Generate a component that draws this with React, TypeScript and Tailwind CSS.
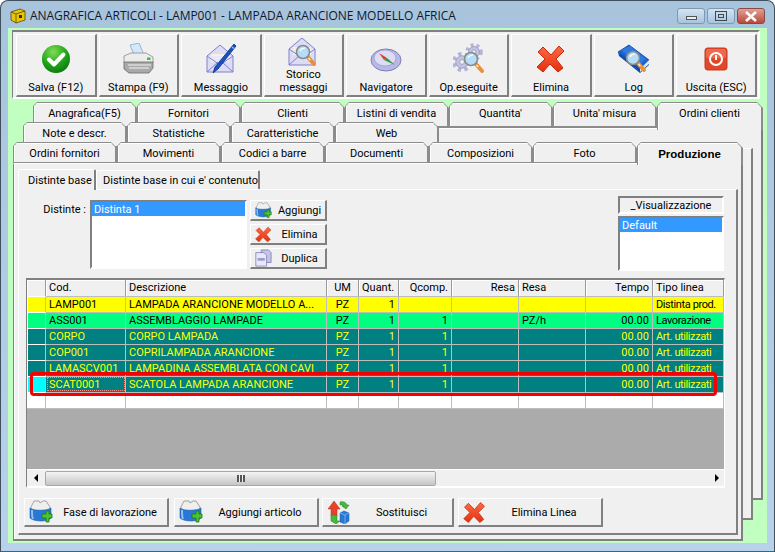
import type { ReactNode } from "react";

const raised =
  "border-t border-l border-t-white border-l-white border-r-2 border-b-2 border-r-[#808080] border-b-[#808080] bg-[#f0f0f0]";
const sunken =
  "border-t-2 border-l-2 border-t-[#808080] border-l-[#808080] border-r-2 border-b-2 border-r-white border-b-white";

function CheckIcon() {
  return (
    <svg width="30" height="30" viewBox="0 0 30 30">
      <defs>
        <radialGradient id="chk" cx="40%" cy="25%" r="85%">
          <stop offset="0" stopColor="#7fdc55" />
          <stop offset="0.55" stopColor="#1fa31a" />
          <stop offset="1" stopColor="#0a6e10" />
        </radialGradient>
      </defs>
      <circle cx="15" cy="15" r="14" fill="url(#chk)" />
      <path d="M8 15.5l5 5 9.5-10" fill="none" stroke="#fff" strokeWidth="4" strokeLinecap="round" strokeLinejoin="round" />
    </svg>
  );
}

function PrinterIcon() {
  return (
    <svg width="32" height="32" viewBox="0 0 32 32">
      <path d="M8 2l9-2 5 12-9 2z" fill="#d2e8fb" stroke="#86a8c6" strokeWidth="0.8" />
      <path d="M2 13l7-3h15l7 4v6H2z" fill="#ececec" stroke="#8a8a8a" strokeWidth="0.8" />
      <path d="M2 19h29v6l-4 5H7l-5-4z" fill="#a9a9a9" stroke="#6a6a6a" strokeWidth="0.8" />
      <path d="M6 22h23M7 25h20" stroke="#f4f4f4" strokeWidth="1.1" />
      <rect x="25" y="14.5" width="3.5" height="2.5" fill="#3fbe3f" />
    </svg>
  );
}

function Envelope() {
  return (
    <>
      <path d="M2 13L15 2l13 11v16H2z" fill="#dcdcf7" stroke="#8080c8" strokeWidth="1" />
      <path d="M6 11h18v8H6z" fill="#fbf1d4" />
      <path d="M2 13l13 9 13-9" fill="#e8e8fb" stroke="#8080c8" strokeWidth="1" />
      <path d="M2 29l11-10M28 29L17 19" stroke="#8080c8" strokeWidth="1" />
    </>
  );
}

function Magnifier({ x, y }: { x: number; y: number }) {
  return (
    <g transform={`translate(${x} ${y})`}>
      <path d="M9 9l7 8" stroke="#e8903a" strokeWidth="4" strokeLinecap="round" />
      <path d="M10.5 11l1.8 2" stroke="#fff2c8" strokeWidth="1.2" />
      <circle cx="5" cy="5" r="6.5" fill="#b5ddf7" stroke="#8a8a8a" strokeWidth="1.6" />
      <path d="M2 4c1-2 2.5-3 5-3" stroke="#fff" strokeWidth="1.2" fill="none" />
    </g>
  );
}

function MailPenIcon() {
  return (
    <svg width="32" height="32" viewBox="0 0 32 32">
      <Envelope />
      <path d="M29 1l2 2L13 26l-5 4 2-6z" fill="#1753c4" stroke="#0b2f7d" strokeWidth="0.8" />
      <path d="M27 4l2 1.5" stroke="#9ac0f5" strokeWidth="1.4" />
    </svg>
  );
}

function MailSearchIcon() {
  return (
    <svg width="32" height="32" viewBox="0 0 32 32">
      <Envelope />
      <Magnifier x={11} y={11} />
    </svg>
  );
}

function CompassIcon() {
  return (
    <svg width="32" height="32" viewBox="0 0 32 32">
      <ellipse cx="16" cy="17" rx="15" ry="11" fill="#b8b8e6" stroke="#7d7db8" strokeWidth="1" />
      <ellipse cx="15" cy="15" rx="11" ry="8" fill="#dcdcf4" stroke="#9a9ad0" strokeWidth="0.8" />
      <path d="M9 10l8 5-3 2z" fill="#e33c26" />
      <path d="M14 17l3-2 8 7z" fill="#2f9a3a" />
    </svg>
  );
}

function Gear({ x, y, r }: { x: number; y: number; r: number }) {
  return (
    <g>
      <circle cx={x} cy={y} r={r} fill="none" stroke="#b4b4d8" strokeWidth={r * 0.5} strokeDasharray={`${r * 0.42} ${r * 0.42}`} />
      <circle cx={x} cy={y} r={r * 0.78} fill="#c4c4e2" stroke="#8c8cba" strokeWidth="0.7" />
      <circle cx={x} cy={y} r={r * 0.3} fill="#f0f0f0" stroke="#8c8cba" strokeWidth="0.7" />
    </g>
  );
}

function GearsIcon() {
  return (
    <svg width="32" height="32" viewBox="0 0 32 32">
      <Gear x={21} y={9} r={7} />
      <Gear x={9} y={19} r={8} />
      <Magnifier x={13} y={11} />
    </svg>
  );
}

function CrossIcon({ size = 30 }: { size?: number }) {
  return (
    <svg width={size} height={size} viewBox="0 0 30 30">
      <defs>
        <linearGradient id="crs" x1="0" y1="0" x2="0" y2="1">
          <stop offset="0" stopColor="#ff6a45" />
          <stop offset="1" stopColor="#e2300f" />
        </linearGradient>
      </defs>
      <path d="M7 3l8 8 8-9 5 5-8 8 7 9-5 4-8-8-7 8-6-5 8-8-7-7z" fill="url(#crs)" stroke="#c8280c" strokeWidth="1" strokeLinejoin="round" />
    </svg>
  );
}

function BookIcon() {
  return (
    <svg width="32" height="30" viewBox="0 0 32 30">
      <path d="M0 8L11 1l20 15-9 9z" fill="#1b63d1" stroke="#0d3f98" strokeWidth="0.8" />
      <path d="M3 6l9-4 16 13-7 6z" fill="#2f7ae0" />
      <path d="M0 8l1 4 21 17 9-8v-5l-9 9z" fill="#0d4cb0" />
      <path d="M22 25l9-9v4l-9 8z" fill="#dfe8f4" />
      <Magnifier x={10} y={9} />
    </svg>
  );
}

function PowerIcon() {
  return (
    <svg width="24" height="24" viewBox="0 0 24 24">
      <rect x="1" y="1" width="22" height="22" rx="2.5" fill="#e0482a" stroke="#c73a1e" />
      <rect x="2" y="2" width="20" height="9" rx="2" fill="#ee6a4c" />
      <circle cx="12" cy="12" r="6" fill="none" stroke="#fff" strokeWidth="2" />
      <path d="M12 8v5" stroke="#fff" strokeWidth="2" />
    </svg>
  );
}

function BinPlusIcon({ size = 24 }: { size?: number }) {
  return (
    <svg width={size} height={size} viewBox="0 0 24 24">
      <path d="M2 7l3-6h5l1 2 3-2h3l4 6v4H2z" fill="#efefef" stroke="#8f8f8f" strokeWidth="0.8" />
      <path d="M1 8c3 3 17 3 21 0v10c-3 4-17 4-21 0z" fill="#2a78d6" stroke="#175aa8" strokeWidth="0.6" />
      <path d="M3 10c0 4 0 7 1 9" stroke="#8cc0f2" strokeWidth="2" fill="none" />
      <path d="M14 13h4v-3h3v3h3v4h-3v4h-3v-4h-4z" transform="translate(-1 1)" fill="#4ec22e" stroke="#1d7a17" strokeWidth="0.8" />
    </svg>
  );
}

function CopyIcon() {
  return (
    <svg width="20" height="20" viewBox="0 0 20 20">
      <path d="M8 1h8l3 3v11H8z" fill="#c4c4e6" stroke="#7474ae" strokeWidth="0.8" />
      <path d="M2 4h9l3 3v12H2z" fill="#e8e8f8" stroke="#7474ae" strokeWidth="0.8" />
      <path d="M4 10h8v3H4z" fill="#9a9ad0" />
    </svg>
  );
}

function SwapIcon() {
  return (
    <svg width="24" height="24" viewBox="0 0 24 24">
      <path d="M6 0l6 8H9v7H3V8H0z" transform="translate(1 1)" fill="#e8432a" stroke="#b02a14" strokeWidth="0.5" />
      <path d="M13 2c3-1 6 0 7 3h2l-3 4-4-3h2c-1-1-2-1-4-1z" fill="#46b83c" stroke="#23801e" strokeWidth="0.5" />
      <path d="M4 15h6v6h3l-4 3-5-3z" fill="#46b83c" stroke="#23801e" strokeWidth="0.5" />
      <path d="M13 13l4-2 5 2v8l-4 3-5-2z" fill="#2a78d6" stroke="#175aa8" strokeWidth="0.5" />
      <path d="M13 13l5 2 4-2M18 15v9" stroke="#8cc0f2" strokeWidth="0.7" fill="none" />
    </svg>
  );
}

function AppIcon() {
  return (
    <svg width="16" height="16" viewBox="0 0 16 16">
      <path d="M1 4l9-3 5 2v9l-9 3-5-3z" fill="#e8c40c" stroke="#5a4a00" strokeWidth="0.8" />
      <path d="M1 4l5 2v9" fill="none" stroke="#5a4a00" strokeWidth="0.8" />
      <path d="M6 6l9-3" stroke="#5a4a00" strokeWidth="0.8" />
      <rect x="9" y="7" width="3" height="3" fill="#3a3000" />
    </svg>
  );
}

function WinButton({ children, close }: { children: ReactNode; close?: boolean }) {
  return (
    <div
      className={`flex h-[16px] w-[28px] items-center justify-center rounded-[3px] border ${
        close
          ? "border-[#8a4a44] bg-gradient-to-b from-[#dfa098] to-[#b8483a]"
          : "border-[#7d98b2] bg-gradient-to-b from-[#d4e4f2] to-[#a8c4dc]"
      }`}
    >
      {children}
    </div>
  );
}

function ToolButton({ icon, label, tall }: { icon: ReactNode; label: ReactNode; tall?: boolean }) {
  return (
    <button className={`flex h-[63px] flex-col items-center justify-end pb-[1px] ${raised}`}>
      <span className={`flex h-[32px] items-center justify-center ${tall ? "mb-0" : "mb-[6px]"}`}>{icon}</span>
      <span className="text-center text-[11px] leading-[13px]">{label}</span>
    </button>
  );
}

function Tab({ label, active, bold }: { label: string; active?: boolean; bold?: boolean }) {
  return (
    <div
      className={`flex flex-col bg-[#8c8c8c] [clip-path:polygon(4px_0,calc(100%-6px)_0,100%_6px,100%_100%,0_100%,0_4px)] ${
        active ? "relative z-10 h-[calc(100%+2px)] w-[106px]" : "h-full w-[104px]"
      }`}
    >
      <div
        className={`ml-px mt-px flex-1 bg-[#f0f0f0] pt-[3px] text-center leading-[16px] [clip-path:polygon(3px_0,calc(100%-4px)_0,100%_4px,100%_100%,0_100%,0_3px)] ${
          active ? "mr-[2px] shadow-[inset_1px_1px_0_#fff]" : "mb-[2px] mr-[2px] shadow-[inset_1px_1px_0_#fff]"
        } ${bold ? "font-['Liberation_Sans',sans-serif] text-[11.5px] font-bold" : "text-[11px]"}`}
      >
        {label}
      </div>
    </div>
  );
}

function SmallButton({ icon, label }: { icon: ReactNode; label: string }) {
  return (
    <button className={`flex h-[21px] w-[77px] items-center pl-[3px] text-[11px] ${raised}`}>
      <span className="flex w-[18px] shrink-0 items-center justify-center">{icon}</span>
      <span className="flex-1 pl-[2px] pt-[3px] text-center">{label}</span>
    </button>
  );
}

function WideButton({ icon, label, className }: { icon: ReactNode; label: string; className: string }) {
  return (
    <button className={`flex h-[29px] items-center pl-[3px] text-[11px] ${raised} ${className}`}>
      <span className="flex w-[25px] shrink-0 items-center justify-center">{icon}</span>
      <span className="flex-1 pt-[2px] text-center">{label}</span>
    </button>
  );
}

const cols = "grid grid-cols-[19px_80px_201px_32px_40px_53px_67px_67px_67px_71px]";

type Row = { cells: string[]; bg: string; text: string; head: string };

const teal = { bg: "bg-[#008080]", text: "text-[#ffff00]", head: "bg-[#008080]" };
const artRow = (cod: string, desc: string) => ({
  cells: [cod, desc, "PZ", "1", "1", "", "", "00.00", "Art. utilizzati"],
  ...teal,
});

const rows: Row[] = [
  {
    cells: ["LAMP001", "LAMPADA ARANCIONE MODELLO A...", "PZ", "1", "", "", "", "", "Distinta prod."],
    bg: "bg-[#ffff00]",
    text: "text-black",
    head: "bg-[#ffff00]",
  },
  {
    cells: ["ASS001", "ASSEMBLAGGIO LAMPADE", "PZ", "1", "1", "", "PZ/h", "00.00", "Lavorazione"],
    bg: "bg-[#00ff80]",
    text: "text-black",
    head: "bg-[#00ff80]",
  },
  artRow("CORPO", "CORPO LAMPADA"),
  artRow("COP001", "COPRILAMPADA ARANCIONE"),
  artRow("LAMASCV001", "LAMPADINA ASSEMBLATA CON CAVI"),
  { ...artRow("SCAT0001", "SCATOLA LAMPADA ARANCIONE"), head: "bg-[#00ffff]" },
  { cells: ["", "", "", "", "", "", "", "", ""], bg: "bg-white", text: "text-black", head: "bg-white" },
];

const align = ["text-left", "text-left", "text-center", "text-right", "text-right", "text-right", "text-left", "text-right", "text-left"];

function HeaderCell({ children, className }: { children?: ReactNode; className?: string }) {
  return (
    <div className={`h-[16px] truncate border-r border-r-[#9a9a9a] bg-[#f0f0f0] px-[3px] text-[11px] leading-[16px] shadow-[inset_1px_1px_0_#fff] ${className ?? ""}`}>
      {children}
    </div>
  );
}

function Grid() {
  return (
    <div className="ml-[7px] flex h-[210px] w-[699px] flex-col overflow-hidden border-t-2 border-l border-r border-b-2 border-t-[#808080] border-l-[#808080] border-r-white border-b-white">
      <div className={cols}>
        <HeaderCell />
        <HeaderCell>Cod.</HeaderCell>
        <HeaderCell>Descrizione</HeaderCell>
        <HeaderCell className="text-center">UM</HeaderCell>
        <HeaderCell>Quant.</HeaderCell>
        <HeaderCell className="text-right">Qcomp.</HeaderCell>
        <HeaderCell className="text-right">Resa</HeaderCell>
        <HeaderCell>Resa</HeaderCell>
        <HeaderCell className="text-right">Tempo</HeaderCell>
        <HeaderCell>Tipo linea</HeaderCell>
      </div>
      {rows.map((row, i) => (
        <div key={i} className={cols}>
          <div className={`h-[16px] border-t border-l border-r border-t-white border-l-white border-r-[#bdbdbd] ${row.head}`} />
          {row.cells.map((cell, j) => (
            <div
              key={j}
              className={`h-[16px] overflow-hidden whitespace-nowrap border-t border-r border-[#bdbdbd] px-[3px] text-[11px] leading-[15px] ${row.bg} ${row.text} ${align[j]} ${
                j === 8 ? "tracking-[-0.4px]" : ""
              } ${i === 5 && j === 0 ? "outline-1 -outline-offset-2 outline-dotted outline-[#ff8a80]" : ""}`}
            >
              {cell}
            </div>
          ))}
        </div>
      ))}
      <div className="flex-1 border-t border-t-[#bdbdbd] bg-[#ababab]" />
      <div className="flex h-[17px] shrink-0 items-center border-t border-t-white bg-[#f0f0f0]">
        <span className="flex w-[18px] shrink-0 justify-center">
          <span className="h-0 w-0 border-y-[4px] border-r-[4px] border-y-transparent border-r-black" />
        </span>
        <div className="flex h-[15px] w-[391px] items-center justify-center rounded-[2px] border border-[#a8a8a8] bg-gradient-to-b from-[#f4f4f4] to-[#c6c6c6]">
          <span className="h-[7px] w-[8px] border-x-2 border-x-[#555] bg-[linear-gradient(90deg,#f4f4f4_33%,#555_33%,#555_66%,#f4f4f4_66%)]" />
        </div>
        <span className="ml-auto mr-[5px] h-0 w-0 border-y-[4px] border-l-[4px] border-y-transparent border-l-black" />
      </div>
    </div>
  );
}

function ListBox({ item, className }: { item: string; className: string }) {
  return (
    <div className={`bg-white text-[11px] ${sunken} ${className}`}>
      <div className="h-[14px] bg-[#3399ff] pl-[2px] leading-[16px] text-white">{item}</div>
    </div>
  );
}

function Production() {
  return (
    <div className="h-[346px] w-[720px] border-t border-l border-t-white border-l-white border-r-2 border-b-2 border-r-[#808080] border-b-[#808080] bg-[#f0f0f0]">
      <div className="flex h-[88px] pt-[6px]">
        <div className="mt-[4px] flex">
          <span className="mr-[4px] mt-[3px] w-[67px] text-right text-[11px] leading-[14px]">Distinte :</span>
          <ListBox item="Distinta 1" className="h-[69px] w-[157px]" />
          <div className="ml-[3px] flex flex-col gap-[3px]">
            <SmallButton icon={<BinPlusIcon size={17} />} label="Aggiungi" />
            <SmallButton icon={<CrossIcon size={17} />} label="Elimina" />
            <SmallButton icon={<CopyIcon />} label="Duplica" />
          </div>
        </div>
        <div className="ml-auto mr-[12px] flex w-[106px] flex-col gap-[2px]">
          <div className={`h-[18px] bg-[#f0f0f0] text-center text-[11px] leading-[15px] ${sunken}`}>_Visualizzazione</div>
          <ListBox item="Default" className="h-[55px] w-[106px]" />
        </div>
      </div>
      <Grid />
      <div className="ml-[5px] mt-[10px] flex">
        <WideButton icon={<BinPlusIcon />} label="Fase di lavorazione" className="w-[145px]" />
        <WideButton icon={<BinPlusIcon />} label="Aggiungi articolo" className="ml-[5px] w-[145px]" />
        <WideButton icon={<SwapIcon />} label="Sostituisci" className="ml-[3px] w-[132px]" />
        <WideButton icon={<CrossIcon size={23} />} label="Elimina Linea" className="ml-[4px] w-[145px]" />
      </div>
    </div>
  );
}

export default function App() {
  return (
    <div className="relative h-[552px] w-[775px] overflow-hidden rounded-t-[8px] border border-[#3f4f5c] border-b-[#1f6f8f] bg-gradient-to-b from-[#a8c4dc] to-[#b8d2ec] font-['Roboto',sans-serif] text-black">
      {/* Title bar */}
      <div className="flex h-[27px] items-center pl-[9px] pr-[9px] pt-[3px]">
        <AppIcon />
        <span className="ml-[4px] font-['Open_Sans',sans-serif] text-[12px] tracking-[-0.06px] text-[#10182c]">
          ANAGRAFICA ARTICOLI - LAMP001 - LAMPADA ARANCIONE MODELLO AFRICA
        </span>
        <div className="ml-auto flex gap-[2px]">
          <WinButton>
            <span className="mt-[3px] h-[4px] w-[11px] border border-[#555] bg-[#e8eef4]" />
          </WinButton>
          <WinButton>
            <span className="flex h-[10px] w-[12px] items-center justify-center border border-[#3c4a58]">
              <span className="h-[4px] w-[6px] border border-[#3c4a58]" />
            </span>
          </WinButton>
          <WinButton close>
            <svg width="14" height="11" viewBox="0 0 14 11">
              <path d="M2 1l10 9M12 1L2 10" stroke="#fff" strokeWidth="2.6" />
            </svg>
          </WinButton>
        </div>
      </div>

      {/* Client area */}
      <div className="ml-[7px] h-[515px] w-[759px] bg-[#c0ffc0] pt-[2px]">
        <div className="ml-[4px] w-[748px] border-t-2 border-l border-r-2 border-b-2 border-t-[#808080] border-l-[#808080] border-r-white border-b-white bg-[#f0f0f0] pl-[3px] pr-[1px] pt-[2px]">
          <div className="grid grid-cols-9 gap-[2px]">
            <ToolButton icon={<CheckIcon />} label="Salva (F12)" />
            <ToolButton icon={<PrinterIcon />} label="Stampa (F9)" />
            <ToolButton icon={<MailPenIcon />} label="Messaggio" />
            <ToolButton icon={<MailSearchIcon />} tall label={<>Storico<br />messaggi</>} />
            <ToolButton icon={<CompassIcon />} label="Navigatore" />
            <ToolButton icon={<GearsIcon />} label="Op.eseguite" />
            <ToolButton icon={<CrossIcon />} label="Elimina" />
            <ToolButton icon={<BookIcon />} label="Log" />
            <ToolButton icon={<PowerIcon />} label="Uscita (ESC)" />
          </div>
        </div>

        {/* Stacked tab pages, back to front */}
        <div className="ml-[25px] mt-[3px] w-[730px]">
          <div className="flex h-[26px]">
            {["Anagrafica(F5)", "Fornitori", "Clienti", "Listini di vendita", "Quantita'", "Unita' misura"].map((t) => (
              <Tab key={t} label={t} />
            ))}
            <Tab label="Ordini clienti" active />
          </div>
          <div className="h-[372px] border-t border-t-white border-r-2 border-b-2 border-r-[#808080] border-b-[#808080] bg-[#f0f0f0]">
            <div className="-ml-[10px] -mt-[7px] w-[730px]">
              <div className="flex h-[26px]">
                {["Note e descr.", "Statistiche", "Caratteristiche", "Web"].map((t) => (
                  <Tab key={t} label={t} />
                ))}
              </div>
              <div className="h-[372px] border-t border-t-white border-r-2 border-b-2 border-r-[#808080] border-b-[#808080] bg-[#f0f0f0]">
                <div className="-ml-[10px] -mt-[7px] w-[730px]">
                  <div className="flex h-[21px]">
                    {["Ordini fornitori", "Movimenti", "Codici a barre", "Documenti", "Composizioni", "Foto"].map((t) => (
                      <Tab key={t} label={t} />
                    ))}
                    <Tab label="Produzione" active bold />
                  </div>
                  <div className="h-[378px] border-t border-l border-t-white border-l-[#808080] border-r-2 border-b-2 border-r-[#808080] border-b-[#808080] bg-[#f0f0f0] pl-[4px] pt-[4px] shadow-[inset_1px_0_0_#fff]">
                    <div className="flex h-[21px] items-end">
                      <div className="relative z-10 -mb-px h-[21px] w-[78px] whitespace-nowrap rounded-t-[2px] border-t border-l border-r-2 border-t-white border-l-white border-r-[#808080] bg-[#f0f0f0] pl-[9px] text-[11px] leading-[21px]">
                        Distinte base
                      </div>
                      <div className="h-[19px] w-[164px] whitespace-nowrap rounded-t-[2px] border-t border-l border-r-2 border-t-white border-l-white border-r-[#808080] bg-[#f0f0f0] pl-[6px] text-[11px] leading-[20px]">
                        Distinte base in cui e' contenuto
                      </div>
                    </div>
                    <Production />
                  </div>
                </div>
              </div>
            </div>
          </div>
        </div>
      </div>

      {/* Highlight drawn on top of the screenshot */}
      <div className="absolute left-[29px] top-[371px] h-[23.5px] w-[687px] rounded-[4px] border-[3.5px] border-[#f50000]" />
    </div>
  );
}
